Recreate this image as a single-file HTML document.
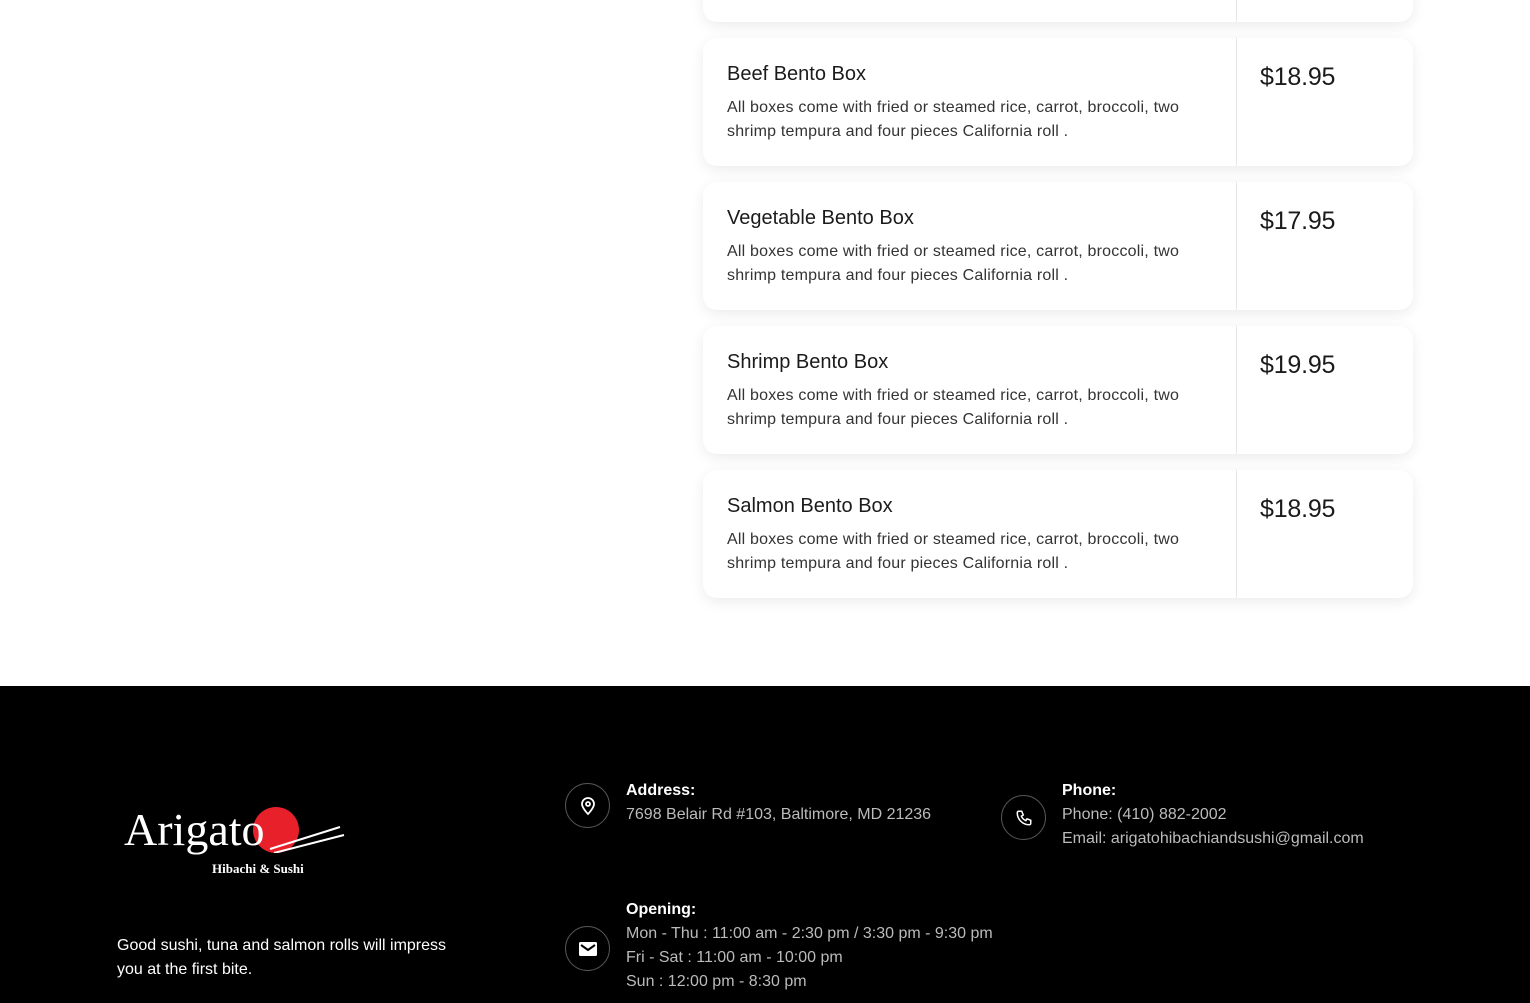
<!DOCTYPE html>
<html><head><style>
*{margin:0;padding:0;box-sizing:border-box}
body{width:1530px;height:1003px;overflow:hidden;background:#fff;font-family:"Liberation Sans",sans-serif;position:relative}
.card{position:absolute;left:703px;width:710px;height:128px;background:#fff;border-radius:14px;box-shadow:0 4px 14px rgba(0,0,0,0.08)}
.card .div{position:absolute;left:533px;top:0;bottom:0;width:1px;background:#e6e6e6}
.card h3{position:absolute;left:24px;top:25px;font-size:20px;font-weight:normal;color:#1b1b1b;letter-spacing:0px}
.card p{position:absolute;left:24px;top:58px;width:470px;font-size:16px;line-height:24px;color:#333;letter-spacing:0.2px}
.card .pr{position:absolute;left:557px;top:25px;font-size:25px;color:#1b1b1b;letter-spacing:-0.2px}
footer{position:absolute;left:0;top:686px;width:1530px;height:317px;background:#000;color:#fff}
.ic{position:absolute;width:45px;height:45px;border:1px solid #555;border-radius:50%;display:flex;align-items:center;justify-content:center}
.t{position:absolute;font-size:16px;line-height:24px;color:#bbb;letter-spacing:0px;white-space:nowrap}
.t b{color:#fff;font-weight:bold}
</style></head><body>
<div class="card" style="top:-106px"><div class="div"></div></div>
<div class="card" style="top:38px"><div class="div"></div><h3>Beef Bento Box</h3><p>All boxes come with fried or steamed rice, carrot, broccoli, two shrimp tempura and four pieces California roll .</p><div class="pr">$18.95</div></div>
<div class="card" style="top:182px"><div class="div"></div><h3>Vegetable Bento Box</h3><p>All boxes come with fried or steamed rice, carrot, broccoli, two shrimp tempura and four pieces California roll .</p><div class="pr">$17.95</div></div>
<div class="card" style="top:326px"><div class="div"></div><h3>Shrimp Bento Box</h3><p>All boxes come with fried or steamed rice, carrot, broccoli, two shrimp tempura and four pieces California roll .</p><div class="pr">$19.95</div></div>
<div class="card" style="top:470px"><div class="div"></div><h3>Salmon Bento Box</h3><p>All boxes come with fried or steamed rice, carrot, broccoli, two shrimp tempura and four pieces California roll .</p><div class="pr">$18.95</div></div>
<footer>
<div style="position:absolute;left:120px;top:115px;width:230px;height:80px">
<div style="position:absolute;left:133px;top:6px;width:46px;height:46px;border-radius:50%;background:#e8202a"></div>
<div style="position:absolute;left:4px;top:2px;font-family:'Liberation Serif',serif;font-size:46px;color:#fff">Arigato</div>
<svg style="position:absolute;left:140px;top:12px" width="90" height="40"><path d="M10 36 L80 14 M14 40 L84 22" stroke="#fff" stroke-width="2"/></svg>
<div style="position:absolute;left:92px;top:60px;font-family:'Liberation Serif',serif;font-weight:bold;font-size:13px;color:#fff">Hibachi &amp; Sushi</div>
</div>
<div class="t" style="left:117px;top:248px;color:#fff;white-space:normal;width:345px">Good sushi, tuna and salmon rolls will impress you at the first bite.</div>
<div class="ic" style="left:565px;top:97px"><svg width="20" height="20" viewBox="0 0 20 20"><path d="M10 18s6-6 6-10a6 6 0 0 0-12 0c0 4 6 10 6 10z" fill="none" stroke="#fff" stroke-width="1.8"/><circle cx="10" cy="8" r="2" fill="none" stroke="#fff" stroke-width="1.8"/></svg></div>
<div class="t" style="left:626px;top:93px"><b>Address:</b><br>7698 Belair Rd #103, Baltimore, MD 21236</div>
<div class="ic" style="left:1001px;top:109px"><svg width="18" height="18" viewBox="0 0 24 24"><path d="M5 3h4l2 5-2.5 1.5a11 11 0 0 0 6 6L16 13l5 2v4a2 2 0 0 1-2 2A16 16 0 0 1 3 5a2 2 0 0 1 2-2z" fill="none" stroke="#fff" stroke-width="2"/></svg></div>
<div class="t" style="left:1062px;top:93px"><b>Phone:</b><br>Phone: (410) 882-2002<br>Email: arigatohibachiandsushi@gmail.com</div>
<div class="ic" style="left:565px;top:240px"><svg width="18" height="14" viewBox="0 0 18 14"><rect width="18" height="14" rx="1.5" fill="#fff"/><path d="M2 3l7 5 7-5" fill="none" stroke="#000" stroke-width="2"/></svg></div>
<div class="t" style="left:626px;top:212px"><b>Opening:</b><br>Mon - Thu : 11:00 am - 2:30 pm / 3:30 pm - 9:30 pm<br>Fri - Sat : 11:00 am - 10:00 pm<br>Sun : 12:00 pm - 8:30 pm</div>
</footer>
</body></html>
